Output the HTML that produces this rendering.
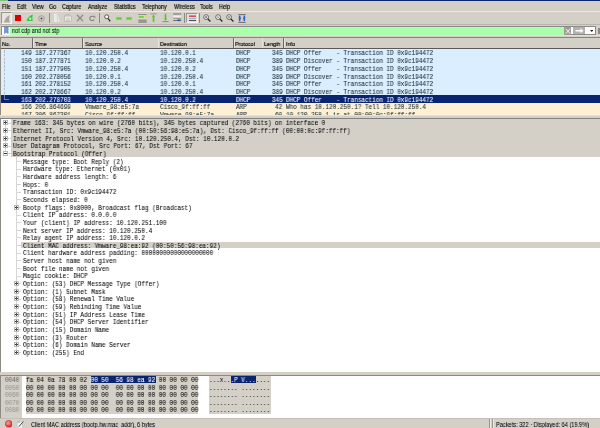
<!DOCTYPE html><html><head><meta charset="utf-8"><style>
*{margin:0;padding:0;box-sizing:border-box}
html,body{width:600px;height:428px;overflow:hidden;background:#d4d0c8}
body{position:relative}
div,span,svg{position:absolute;display:block}
.m{font-family:'Liberation Mono', monospace;font-size:6.6px;white-space:pre;line-height:10.9px;color:#000;-webkit-text-stroke:0.05px currentColor;transform:scaleX(0.907);transform-origin:0 0;will-change:transform}
.s{font-family:'Liberation Sans', sans-serif;font-size:6.5px;white-space:pre;line-height:8px;color:#000;will-change:transform;transform:scaleX(0.83);transform-origin:0 0;-webkit-text-stroke:0.15px #000}
</style></head><body>

<div style="left:0px;top:0px;width:600px;height:1.3px;background:#0a2570;"></div>
<div style="left:0px;top:0px;width:8px;height:1.3px;background:#7cc47c;"></div>
<span class="s" style="left:2px;top:3.2px">File</span>
<span class="s" style="left:17px;top:3.2px">Edit</span>
<span class="s" style="left:32px;top:3.2px">View</span>
<span class="s" style="left:49px;top:3.2px">Go</span>
<span class="s" style="left:62px;top:3.2px">Capture</span>
<span class="s" style="left:87.5px;top:3.2px">Analyze</span>
<span class="s" style="left:113.7px;top:3.2px">Statistics</span>
<span class="s" style="left:142px;top:3.2px">Telephony</span>
<span class="s" style="left:173.7px;top:3.2px">Wireless</span>
<span class="s" style="left:200px;top:3.2px">Tools</span>
<span class="s" style="left:218.7px;top:3.2px">Help</span>
<div style="left:0px;top:10.8px;width:600px;height:0.9px;background:#ebe9e4;"></div>
<div style="left:1px;top:12.2px;width:10.5px;height:11.6px;background:#e6e4df;border-top:0.9px solid #9b9891;border-left:0.9px solid #9b9891;border-bottom:0.7px solid #f4f3f0;border-right:0.7px solid #f4f3f0"></div>
<svg style="left:3px;top:13.5px" width="8" height="9" viewBox="0 0 8 9"><path d="M1 8.5 C2 5 3.5 2.2 6.8 1 C6 3.5 6 6.5 6.8 8.5 Z" fill="#aba69d"/></svg>
<div style="left:15px;top:15px;width:5.7px;height:6px;background:#e00000;"></div>
<svg style="left:26px;top:14.2px" width="7.5" height="7.5" viewBox="0 0 7.5 7.5"><path d="M0.5 7 C1.5 4 3.5 1.5 6.8 0.5 C6.2 3 6.2 5 6.8 7 Z" fill="#2ccc2c"/><circle cx="4.2" cy="4.7" r="1.2" fill="#c8f0c8"/></svg>
<svg style="left:38px;top:14.5px" width="7" height="7" viewBox="0 0 7 7"><circle cx="3.5" cy="3.5" r="2.8" fill="none" stroke="#8f8c85" stroke-width="0.7"/><circle cx="3.5" cy="3.5" r="1" fill="#4a4a4a"/></svg>
<div style="left:49px;top:13px;width:0.9px;height:9.5px;background:#8d8a84;"></div>
<svg style="left:52.5px;top:13px" width="8" height="9.5" viewBox="0 0 8 9.5"><path d="M1 0.8 L4.5 0.5 L6.8 9 L1 9Z" fill="#ebe9e5"/><path d="M4 1 L4.8 9" stroke="#cfccc6" stroke-width="0.8"/></svg>
<svg style="left:64px;top:13.8px" width="8" height="8" viewBox="0 0 8 8"><rect x="0.5" y="2" width="7" height="5.5" fill="#e9e7e3" stroke="#b3b0a9" stroke-width="0.6"/><path d="M1 2 L2 0.5 L5 0.5 L6 2" fill="none" stroke="#b3b0a9" stroke-width="0.6"/><path d="M2 5 H6 M2 6.3 H6" stroke="#aaa7a0" stroke-width="0.5"/></svg>
<svg style="left:76px;top:13.5px" width="8" height="8" viewBox="0 0 8 8"><path d="M0.8 0.8 H7.2 M0.8 7.2 H7.2" stroke="#c4c1ba" stroke-width="0.6"/><path d="M1 1 L7 7 M7 1 L1 7" stroke="#8a8780" stroke-width="1.1"/></svg>
<svg style="left:88px;top:13.5px" width="8" height="8" viewBox="0 0 8 8"><path d="M0.8 0.8 H7.2" stroke="#c4c1ba" stroke-width="0.6"/><path d="M6.2 3.2 A2.4 2.2 0 1 0 6.2 5.6" fill="none" stroke="#85827b" stroke-width="1.1"/><path d="M5 2.3 L7 2.3 L7 4.2" fill="none" stroke="#85827b" stroke-width="0.7"/></svg>
<div style="left:99px;top:13px;width:0.9px;height:9.5px;background:#8d8a84;"></div>
<svg style="left:103.5px;top:13.5px" width="7" height="8" viewBox="0 0 7 8"><circle cx="2.7" cy="2.8" r="2" fill="#f6f6f6" stroke="#3a3a3a" stroke-width="0.8"/><path d="M4.1 4.5 L6.2 7.3" stroke="#1e1e1e" stroke-width="1.2"/></svg>
<svg style="left:114.5px;top:15.5px" width="7" height="5" viewBox="0 0 7 5"><path d="M0.3 2.5 L2 0.6 L2 1.2 L6.6 1.2 L6.6 3.8 L2 3.8 L2 4.4Z" fill="#66cc33"/><path d="M0.5 2.5 L2 1.2 M0.5 2.5 L2 3.8" stroke="#eaf5e0" stroke-width="0.4"/></svg>
<svg style="left:126.3px;top:15.5px" width="7" height="5" viewBox="0 0 7 5"><path d="M6.7 2.5 L5 0.6 L5 1.2 L0.4 1.2 L0.4 3.8 L5 3.8 L5 4.4Z" fill="#66cc33"/><path d="M6.5 2.5 L5 1.2 M6.5 2.5 L5 3.8" stroke="#eaf5e0" stroke-width="0.4"/></svg>
<svg style="left:137.5px;top:13.5px" width="9" height="9" viewBox="0 0 9 9"><rect x="0.3" y="0.3" width="8.4" height="0.7" fill="#777"/><rect x="0.3" y="1.5" width="8.4" height="2.8" fill="#cfe6b0"/><rect x="0.8" y="2" width="5" height="1.8" fill="#7ccc3c"/><rect x="6.8" y="1.6" width="1.8" height="1.6" fill="#f0d020"/><rect x="0.3" y="5.8" width="8.4" height="0.7" fill="#555"/><rect x="0.3" y="7.6" width="8.4" height="0.8" fill="#444"/></svg>
<svg style="left:149.5px;top:13px" width="7" height="9.5" viewBox="0 0 7 9.5"><rect x="0.3" y="0.5" width="6.4" height="0.8" fill="#8a8a8a"/><path d="M3.5 1.8 L5.2 3.8 L4.3 3.8 L4.3 8.8 L2.7 8.8 L2.7 3.8 L1.8 3.8Z" fill="#5cc02a"/></svg>
<svg style="left:161.5px;top:13px" width="7" height="9.5" viewBox="0 0 7 9.5"><rect x="0.3" y="8.3" width="6.4" height="0.8" fill="#777"/><path d="M3.5 7.8 L5.2 5.8 L4.3 5.8 L4.3 0.8 L2.7 0.8 L2.7 5.8 L1.8 5.8Z" fill="#5cc02a"/></svg>
<svg style="left:173px;top:13.3px" width="9" height="9" viewBox="0 0 9 9"><rect x="0.2" y="0.6" width="8" height="0.8" fill="#555"/><rect x="0.2" y="2.5" width="8" height="2" fill="#ecebe8"/><rect x="0.2" y="4.9" width="8" height="0.7" fill="#777"/><rect x="0.2" y="7" width="8" height="0.8" fill="#555"/><path d="M3.8 6.5 L8.3 6.5 L6 8.6Z" fill="#1f4fc8"/></svg>
<div style="left:184.3px;top:13px;width:0.9px;height:9.5px;background:#8d8a84;"></div>
<div style="left:185.5px;top:12.7px;width:12.5px;height:10.2px;background:#e2dfda;border-top:0.9px solid #9b9891;border-left:0.9px solid #9b9891;border-bottom:0.7px solid #f4f3f0;border-right:0.7px solid #f4f3f0"></div>
<div style="left:189px;top:14.8px;width:7.2px;height:0.9px;background:#8fa8a8;"></div>
<div style="left:189px;top:16.2px;width:7.2px;height:0.9px;background:#e84848;"></div>
<div style="left:189px;top:18.0px;width:7.2px;height:1.3px;background:#98b4e0;"></div>
<div style="left:189px;top:20.3px;width:7.2px;height:0.9px;background:#505050;"></div>
<div style="left:199.3px;top:13px;width:0.9px;height:9.5px;background:#8d8a84;"></div>
<svg style="left:203px;top:13.7px" width="8" height="8" viewBox="0 0 8 8"><circle cx="3.1" cy="3.1" r="2.4" fill="#f6f6f6" stroke="#3a3a3a" stroke-width="0.7"/><path d="M2 3.1 H4.2 M3.1 2 V4.2" stroke="#333" stroke-width="0.6"/><path d="M4.8 4.9 L7.4 7.5" stroke="#1e1e1e" stroke-width="1.2"/></svg>
<svg style="left:214.5px;top:13.7px" width="8" height="8" viewBox="0 0 8 8"><circle cx="3.1" cy="3.1" r="2.4" fill="#f6f6f6" stroke="#3a3a3a" stroke-width="0.7"/><path d="M2 3.1 H4.2" stroke="#333" stroke-width="0.6"/><path d="M4.8 4.9 L7.4 7.5" stroke="#1e1e1e" stroke-width="1.2"/></svg>
<svg style="left:226px;top:13.7px" width="8" height="8" viewBox="0 0 8 8"><circle cx="3.1" cy="3.1" r="2.4" fill="#f6f6f6" stroke="#3a3a3a" stroke-width="0.7"/><path d="M2 2.7 H4.2 M2 3.7 H4.2" stroke="#333" stroke-width="0.5"/><path d="M4.8 4.9 L7.4 7.5" stroke="#1e1e1e" stroke-width="1.2"/></svg>
<svg style="left:238px;top:13.5px" width="8" height="9" viewBox="0 0 8 9"><rect x="0.3" y="0.3" width="7.4" height="0.8" fill="#555"/><rect x="0.3" y="7.9" width="7.4" height="0.8" fill="#555"/><path d="M0.8 2 L3.2 4.3 L0.8 6.6Z" fill="#2a5fd0"/><path d="M7.2 2 L4.8 4.3 L7.2 6.6Z" fill="#2a5fd0"/><rect x="1" y="1.6" width="1.4" height="5.6" fill="#2a5fd0"/><rect x="5.6" y="1.6" width="1.4" height="5.6" fill="#2a5fd0"/></svg>
<div style="left:0px;top:23.6px;width:600px;height:0.7px;background:#e9e7e2;"></div>
<div style="left:0px;top:24.3px;width:600px;height:0.8px;background:#b9b5ad;"></div>
<div style="left:1px;top:26px;width:594.5px;height:9.4px;background:#ffffff;border:0.8px solid #8a8a8a"></div>
<div style="left:0px;top:35.4px;width:600px;height:1px;background:#e4e1db;"></div>
<div style="left:1.5px;top:26.5px;width:8.5px;height:8.3px;background:#ffffff;"></div>
<svg style="left:3.5px;top:27.3px" width="5" height="7" viewBox="0 0 5 7"><path d="M0.3 0 H4.2 V6.8 L2.25 5.2 L0.3 6.8Z" fill="#6f9bd8" stroke="#3d6fb8" stroke-width="0.4"/></svg>
<div style="left:10px;top:26.5px;width:553.5px;height:8.3px;background:#aaffaa;"></div>
<span class="s" style="left:12px;top:26.9px;font-size:6.7px;-webkit-text-stroke:0.05px #000">not cdp and not stp</span>
<div style="left:563.5px;top:26.5px;width:7.5px;height:8.3px;background:#9f9c96;"></div>
<svg style="left:564.5px;top:27.5px" width="6" height="6.5" viewBox="0 0 6 6.5"><path d="M0.8 0.8 L5.2 5.7 M5.2 0.8 L0.8 5.7" stroke="#fff" stroke-width="0.9"/></svg>
<div style="left:573px;top:27px;width:11.5px;height:7.3px;background:#b5b1aa;"></div>
<svg style="left:574.5px;top:28px" width="9" height="5.5" viewBox="0 0 9 5.5"><path d="M0.5 2 H5.5 V0.3 L8.5 2.75 L5.5 5.2 V3.5 H0.5Z" fill="#fff"/></svg>
<svg style="left:589.5px;top:29.5px" width="3.5" height="2" viewBox="0 0 3.5 2"><path d="M0 0 H3.5 L1.75 2Z" fill="#222"/></svg>
<div style="left:597.5px;top:27.5px;width:3px;height:6px;background:#8d8a84;"></div>
<div style="left:0px;top:37px;width:600px;height:77.75px;background:#ffffff;border-left:1px solid #8d8a84"></div>
<div style="left:1px;top:37px;width:599px;height:11.5px;background:#d4d0c8;"></div>
<div style="left:0px;top:37px;width:600px;height:0.9px;background:#858585;"></div>
<div style="left:1px;top:48.2px;width:599px;height:1px;background:#5a5a5a;"></div>
<span class="s" style="left:2px;top:40.3px;font-size:6px;transform:scaleX(0.9)">No.</span>
<div style="left:32.0px;top:37.8px;width:0.9px;height:10.5px;background:#6a6a6a;"></div>
<div style="left:32.9px;top:37.8px;width:0.6px;height:10.5px;background:#e6e4df;"></div>
<span class="s" style="left:35px;top:40.3px;font-size:6px;transform:scaleX(0.9)">Time</span>
<div style="left:81.9px;top:37.8px;width:0.9px;height:10.5px;background:#6a6a6a;"></div>
<div style="left:82.80000000000001px;top:37.8px;width:0.6px;height:10.5px;background:#e6e4df;"></div>
<span class="s" style="left:85px;top:40.3px;font-size:6px;transform:scaleX(0.9)">Source</span>
<div style="left:157.5px;top:37.8px;width:0.9px;height:10.5px;background:#6a6a6a;"></div>
<div style="left:158.4px;top:37.8px;width:0.6px;height:10.5px;background:#e6e4df;"></div>
<span class="s" style="left:160px;top:40.3px;font-size:6px;transform:scaleX(0.9)">Destination</span>
<div style="left:233.1px;top:37.8px;width:0.9px;height:10.5px;background:#6a6a6a;"></div>
<div style="left:234.0px;top:37.8px;width:0.6px;height:10.5px;background:#e6e4df;"></div>
<span class="s" style="left:235.3px;top:40.3px;font-size:6px;transform:scaleX(0.9)">Protocol</span>
<div style="left:261.5px;top:37.8px;width:0.9px;height:10.5px;background:#6a6a6a;"></div>
<div style="left:262.4px;top:37.8px;width:0.6px;height:10.5px;background:#e6e4df;"></div>
<span class="s" style="left:264px;top:40.3px;font-size:6px;transform:scaleX(0.9)">Length</span>
<div style="left:283.2px;top:37.8px;width:0.9px;height:10.5px;background:#6a6a6a;"></div>
<div style="left:284.09999999999997px;top:37.8px;width:0.6px;height:10.5px;background:#e6e4df;"></div>
<span class="s" style="left:285.6px;top:40.3px;font-size:6px;transform:scaleX(0.9)">Info</span>
<div style="left:1px;top:49.3px;width:599px;height:65.45px;overflow:hidden">
<div style="left:0;top:0.0px;width:599px;height:7.72px;background:#daeeff"></div>
<span class="m" style="left:19.827px;top:0.2px;color:#12272e">149</span>
<span class="m" style="left:34px;top:0.2px;color:#12272e">187.277367</span>
<span class="m" style="left:84.3px;top:0.2px;color:#12272e">10.120.250.4</span>
<span class="m" style="left:159.3px;top:0.2px;color:#12272e">10.120.0.1</span>
<span class="m" style="left:234.5px;top:0.2px;color:#12272e">DHCP</span>
<span class="m" style="left:270.527px;top:0.2px;color:#12272e">345</span>
<span class="m" style="left:284.5px;top:0.2px;color:#12272e">DHCP Offer    - Transaction ID 0x9c194472</span>
<div style="left:0;top:7.67px;width:599px;height:7.72px;background:#daeeff"></div>
<span class="m" style="left:19.827px;top:7.87px;color:#12272e">150</span>
<span class="m" style="left:34px;top:7.87px;color:#12272e">187.277871</span>
<span class="m" style="left:84.3px;top:7.87px;color:#12272e">10.120.0.2</span>
<span class="m" style="left:159.3px;top:7.87px;color:#12272e">10.120.250.4</span>
<span class="m" style="left:234.5px;top:7.87px;color:#12272e">DHCP</span>
<span class="m" style="left:270.527px;top:7.87px;color:#12272e">389</span>
<span class="m" style="left:284.5px;top:7.87px;color:#12272e">DHCP Discover - Transaction ID 0x9c194472</span>
<div style="left:0;top:15.34px;width:599px;height:7.72px;background:#daeeff"></div>
<span class="m" style="left:19.827px;top:15.54px;color:#12272e">151</span>
<span class="m" style="left:34px;top:15.54px;color:#12272e">187.277905</span>
<span class="m" style="left:84.3px;top:15.54px;color:#12272e">10.120.250.4</span>
<span class="m" style="left:159.3px;top:15.54px;color:#12272e">10.120.0.2</span>
<span class="m" style="left:234.5px;top:15.54px;color:#12272e">DHCP</span>
<span class="m" style="left:270.527px;top:15.54px;color:#12272e">345</span>
<span class="m" style="left:284.5px;top:15.54px;color:#12272e">DHCP Offer    - Transaction ID 0x9c194472</span>
<div style="left:0;top:23.009999999999998px;width:599px;height:7.72px;background:#daeeff"></div>
<span class="m" style="left:19.827px;top:23.209999999999997px;color:#12272e">160</span>
<span class="m" style="left:34px;top:23.209999999999997px;color:#12272e">202.278056</span>
<span class="m" style="left:84.3px;top:23.209999999999997px;color:#12272e">10.120.0.1</span>
<span class="m" style="left:159.3px;top:23.209999999999997px;color:#12272e">10.120.250.4</span>
<span class="m" style="left:234.5px;top:23.209999999999997px;color:#12272e">DHCP</span>
<span class="m" style="left:270.527px;top:23.209999999999997px;color:#12272e">389</span>
<span class="m" style="left:284.5px;top:23.209999999999997px;color:#12272e">DHCP Discover - Transaction ID 0x9c194472</span>
<div style="left:0;top:30.68px;width:599px;height:7.72px;background:#daeeff"></div>
<span class="m" style="left:19.827px;top:30.88px;color:#12272e">161</span>
<span class="m" style="left:34px;top:30.88px;color:#12272e">202.278152</span>
<span class="m" style="left:84.3px;top:30.88px;color:#12272e">10.120.250.4</span>
<span class="m" style="left:159.3px;top:30.88px;color:#12272e">10.120.0.1</span>
<span class="m" style="left:234.5px;top:30.88px;color:#12272e">DHCP</span>
<span class="m" style="left:270.527px;top:30.88px;color:#12272e">345</span>
<span class="m" style="left:284.5px;top:30.88px;color:#12272e">DHCP Offer    - Transaction ID 0x9c194472</span>
<div style="left:0;top:38.35px;width:599px;height:7.72px;background:#daeeff"></div>
<span class="m" style="left:19.827px;top:38.550000000000004px;color:#12272e">162</span>
<span class="m" style="left:34px;top:38.550000000000004px;color:#12272e">202.278667</span>
<span class="m" style="left:84.3px;top:38.550000000000004px;color:#12272e">10.120.0.2</span>
<span class="m" style="left:159.3px;top:38.550000000000004px;color:#12272e">10.120.250.4</span>
<span class="m" style="left:234.5px;top:38.550000000000004px;color:#12272e">DHCP</span>
<span class="m" style="left:270.527px;top:38.550000000000004px;color:#12272e">389</span>
<span class="m" style="left:284.5px;top:38.550000000000004px;color:#12272e">DHCP Discover - Transaction ID 0x9c194472</span>
<div style="left:0;top:46.019999999999996px;width:599px;height:7.72px;background:#0a2570"></div>
<span class="m" style="left:19.827px;top:46.22px;color:#fff">163</span>
<span class="m" style="left:34px;top:46.22px;color:#fff">202.278703</span>
<span class="m" style="left:84.3px;top:46.22px;color:#fff">10.120.250.4</span>
<span class="m" style="left:159.3px;top:46.22px;color:#fff">10.120.0.2</span>
<span class="m" style="left:234.5px;top:46.22px;color:#fff">DHCP</span>
<span class="m" style="left:270.527px;top:46.22px;color:#fff">345</span>
<span class="m" style="left:284.5px;top:46.22px;color:#fff">DHCP Offer    - Transaction ID 0x9c194472</span>
<div style="left:0;top:53.69px;width:599px;height:7.72px;background:#fdf0d5"></div>
<span class="m" style="left:19.827px;top:53.89px;color:#12272e">166</span>
<span class="m" style="left:34px;top:53.89px;color:#12272e">206.864699</span>
<span class="m" style="left:84.3px;top:53.89px;color:#12272e">Vmware_98:e5:7a</span>
<span class="m" style="left:159.3px;top:53.89px;color:#12272e">Cisco_9f:ff:ff</span>
<span class="m" style="left:234.5px;top:53.89px;color:#12272e">ARP</span>
<span class="m" style="left:274.118px;top:53.89px;color:#12272e">42</span>
<span class="m" style="left:284.5px;top:53.89px;color:#12272e">Who has 10.120.250.1? Tell 10.120.250.4</span>
<div style="left:0;top:61.36px;width:599px;height:7.72px;background:#fdf0d5"></div>
<span class="m" style="left:19.827px;top:61.56px;color:#12272e">167</span>
<span class="m" style="left:34px;top:61.56px;color:#12272e">206.867301</span>
<span class="m" style="left:84.3px;top:61.56px;color:#12272e">Cisco_9f:ff:ff</span>
<span class="m" style="left:159.3px;top:61.56px;color:#12272e">Vmware_98:e5:7a</span>
<span class="m" style="left:234.5px;top:61.56px;color:#12272e">ARP</span>
<span class="m" style="left:274.118px;top:61.56px;color:#12272e">60</span>
<span class="m" style="left:284.5px;top:61.56px;color:#12272e">10.120.250.1 is at 00:00:0c:9f:ff:ff</span>
</div>
<div style="left:4.2px;top:49.5px;width:0.8px;height:45.5px;background:repeating-linear-gradient(#b4bcc4 0 2.5px, #dde6ee 2.5px 3.8px)"></div>
<div style="left:4.2px;top:95px;width:0.8px;height:4.4px;background:#6a7aa0"></div>
<div style="left:4.2px;top:98.6px;width:4.5px;height:0.8px;background:#6a7aa0"></div>
<div style="left:0px;top:114.75px;width:600px;height:3.75px;background:#d4d0c8;"></div>
<div style="left:0px;top:114.75px;width:600px;height:1px;background:#e4e1db;"></div>
<div style="left:0px;top:117.6px;width:600px;height:0.9px;background:#808080;"></div>
<div style="left:0px;top:118.6px;width:600px;height:253px;background:#ffffff;border-left:1px solid #8d8a84"></div>
<div style="left:11px;top:118.80000000000001px;width:589px;height:37.79999999999998px;background:#d4d0c8;"></div>
<div style="left:5.3px;top:123.2px;width:0.8px;height:30.6px;background:#d6d6d6"></div>
<div style="left:16.2px;top:156.6px;width:0.8px;height:196.1px;background:#d6d6d6"></div>
<div style="left:8px;top:122.7px;width:3px;height:0.8px;background:#d6d6d6"></div>
<div style="left:3.0px;top:120px;width:5.2px;height:5px;border:0.7px solid #b8b8b8;background:#fff"></div>
<div style="left:4.2px;top:122.1px;width:2.8px;height:0.8px;background:#333"></div>
<div style="left:5.3px;top:121.2px;width:0.6px;height:2.6px;background:#555"></div>
<span class="m" style="left:12.700000000000001px;top:119.4px">Frame 163: 345 bytes on wire (2760 bits), 345 bytes captured (2760 bits) on interface 0</span>
<div style="left:8px;top:130.35000000000002px;width:3px;height:0.8px;background:#d6d6d6"></div>
<div style="left:3.0px;top:128px;width:5.2px;height:5px;border:0.7px solid #b8b8b8;background:#fff"></div>
<div style="left:4.2px;top:130.1px;width:2.8px;height:0.8px;background:#333"></div>
<div style="left:5.3px;top:129.2px;width:0.6px;height:2.6px;background:#555"></div>
<span class="m" style="left:12.700000000000001px;top:127.05000000000001px">Ethernet II, Src: Vmware_98:e5:7a (00:50:56:98:e5:7a), Dst: Cisco_9f:ff:ff (00:00:0c:9f:ff:ff)</span>
<div style="left:8px;top:138.00000000000003px;width:3px;height:0.8px;background:#d6d6d6"></div>
<div style="left:3.0px;top:136px;width:5.2px;height:5px;border:0.7px solid #b8b8b8;background:#fff"></div>
<div style="left:4.2px;top:138.1px;width:2.8px;height:0.8px;background:#333"></div>
<div style="left:5.3px;top:137.2px;width:0.6px;height:2.6px;background:#555"></div>
<span class="m" style="left:12.700000000000001px;top:134.70000000000002px">Internet Protocol Version 4, Src: 10.120.250.4, Dst: 10.120.0.2</span>
<div style="left:8px;top:145.65000000000003px;width:3px;height:0.8px;background:#d6d6d6"></div>
<div style="left:3.0px;top:143px;width:5.2px;height:5px;border:0.7px solid #b8b8b8;background:#fff"></div>
<div style="left:4.2px;top:145.1px;width:2.8px;height:0.8px;background:#333"></div>
<div style="left:5.3px;top:144.2px;width:0.6px;height:2.6px;background:#555"></div>
<span class="m" style="left:12.700000000000001px;top:142.35000000000002px">User Datagram Protocol, Src Port: 67, Dst Port: 67</span>
<div style="left:8px;top:153.3px;width:3px;height:0.8px;background:#d6d6d6"></div>
<div style="left:3.0px;top:151px;width:5.2px;height:5px;border:0.7px solid #b8b8b8;background:#fff"></div>
<div style="left:4.2px;top:153.1px;width:2.8px;height:0.8px;background:#333"></div>
<span class="m" style="left:12.700000000000001px;top:150.0px">Bootstrap Protocol (Offer)</span>
<div style="left:16.8px;top:160.95000000000002px;width:4.699999999999999px;height:0.8px;background:#d6d6d6"></div>
<span class="m" style="left:22.5px;top:157.65px">Message type: Boot Reply (2)</span>
<div style="left:16.8px;top:168.60000000000002px;width:4.699999999999999px;height:0.8px;background:#d6d6d6"></div>
<span class="m" style="left:22.5px;top:165.3px">Hardware type: Ethernet (0x01)</span>
<div style="left:16.8px;top:176.25000000000003px;width:4.699999999999999px;height:0.8px;background:#d6d6d6"></div>
<span class="m" style="left:22.5px;top:172.95000000000002px">Hardware address length: 6</span>
<div style="left:16.8px;top:183.90000000000003px;width:4.699999999999999px;height:0.8px;background:#d6d6d6"></div>
<span class="m" style="left:22.5px;top:180.60000000000002px">Hops: 0</span>
<div style="left:16.8px;top:191.55px;width:4.699999999999999px;height:0.8px;background:#d6d6d6"></div>
<span class="m" style="left:22.5px;top:188.25px">Transaction ID: 0x9c194472</span>
<div style="left:16.8px;top:199.20000000000002px;width:4.699999999999999px;height:0.8px;background:#d6d6d6"></div>
<span class="m" style="left:22.5px;top:195.9px">Seconds elapsed: 0</span>
<div style="left:19.2px;top:206.85000000000002px;width:2.3px;height:0.8px;background:#d6d6d6"></div>
<div style="left:14.0px;top:205px;width:5.2px;height:5px;border:0.7px solid #b8b8b8;background:#fff"></div>
<div style="left:15.2px;top:207.1px;width:2.8px;height:0.8px;background:#333"></div>
<div style="left:16.3px;top:206.2px;width:0.6px;height:2.6px;background:#555"></div>
<span class="m" style="left:22.5px;top:203.55px">Bootp flags: 0x8000, Broadcast flag (Broadcast)</span>
<div style="left:16.8px;top:214.50000000000003px;width:4.699999999999999px;height:0.8px;background:#d6d6d6"></div>
<span class="m" style="left:22.5px;top:211.20000000000002px">Client IP address: 0.0.0.0</span>
<div style="left:16.8px;top:222.15000000000003px;width:4.699999999999999px;height:0.8px;background:#d6d6d6"></div>
<span class="m" style="left:22.5px;top:218.85000000000002px">Your (client) IP address: 10.120.251.100</span>
<div style="left:16.8px;top:229.8px;width:4.699999999999999px;height:0.8px;background:#d6d6d6"></div>
<span class="m" style="left:22.5px;top:226.5px">Next server IP address: 10.120.250.4</span>
<div style="left:16.8px;top:237.45000000000002px;width:4.699999999999999px;height:0.8px;background:#d6d6d6"></div>
<span class="m" style="left:22.5px;top:234.15px">Relay agent IP address: 10.120.0.2</span>
<div style="left:16.8px;top:245.10000000000002px;width:4.699999999999999px;height:0.8px;background:#d6d6d6"></div>
<div style="left:21px;top:241.8px;width:579px;height:6.7px;background:#d4d0c8;"></div>
<span class="m" style="left:22.5px;top:241.8px">Client MAC address: Vmware_98:ea:92 (00:50:56:98:ea:92)</span>
<div style="left:16.8px;top:252.75000000000003px;width:4.699999999999999px;height:0.8px;background:#d6d6d6"></div>
<span class="m" style="left:22.5px;top:249.45000000000002px">Client hardware address padding: 00000000000000000000</span>
<div style="left:16.8px;top:260.40000000000003px;width:4.699999999999999px;height:0.8px;background:#d6d6d6"></div>
<span class="m" style="left:22.5px;top:257.1px">Server host name not given</span>
<div style="left:16.8px;top:268.05px;width:4.699999999999999px;height:0.8px;background:#d6d6d6"></div>
<span class="m" style="left:22.5px;top:264.75px">Boot file name not given</span>
<div style="left:16.8px;top:275.7px;width:4.699999999999999px;height:0.8px;background:#d6d6d6"></div>
<span class="m" style="left:22.5px;top:272.4px">Magic cookie: DHCP</span>
<div style="left:19.2px;top:283.35px;width:2.3px;height:0.8px;background:#d6d6d6"></div>
<div style="left:14.0px;top:281px;width:5.2px;height:5px;border:0.7px solid #b8b8b8;background:#fff"></div>
<div style="left:15.2px;top:283.1px;width:2.8px;height:0.8px;background:#333"></div>
<div style="left:16.3px;top:282.2px;width:0.6px;height:2.6px;background:#555"></div>
<span class="m" style="left:22.5px;top:280.05px">Option: (53) DHCP Message Type (Offer)</span>
<div style="left:19.2px;top:291.00000000000006px;width:2.3px;height:0.8px;background:#d6d6d6"></div>
<div style="left:14.0px;top:289px;width:5.2px;height:5px;border:0.7px solid #b8b8b8;background:#fff"></div>
<div style="left:15.2px;top:291.1px;width:2.8px;height:0.8px;background:#333"></div>
<div style="left:16.3px;top:290.2px;width:0.6px;height:2.6px;background:#555"></div>
<span class="m" style="left:22.5px;top:287.70000000000005px">Option: (1) Subnet Mask</span>
<div style="left:19.2px;top:298.65000000000003px;width:2.3px;height:0.8px;background:#d6d6d6"></div>
<div style="left:14.0px;top:296px;width:5.2px;height:5px;border:0.7px solid #b8b8b8;background:#fff"></div>
<div style="left:15.2px;top:298.1px;width:2.8px;height:0.8px;background:#333"></div>
<div style="left:16.3px;top:297.2px;width:0.6px;height:2.6px;background:#555"></div>
<span class="m" style="left:22.5px;top:295.35px">Option: (58) Renewal Time Value</span>
<div style="left:19.2px;top:306.3px;width:2.3px;height:0.8px;background:#d6d6d6"></div>
<div style="left:14.0px;top:304px;width:5.2px;height:5px;border:0.7px solid #b8b8b8;background:#fff"></div>
<div style="left:15.2px;top:306.1px;width:2.8px;height:0.8px;background:#333"></div>
<div style="left:16.3px;top:305.2px;width:0.6px;height:2.6px;background:#555"></div>
<span class="m" style="left:22.5px;top:303.0px">Option: (59) Rebinding Time Value</span>
<div style="left:19.2px;top:313.95px;width:2.3px;height:0.8px;background:#d6d6d6"></div>
<div style="left:14.0px;top:312px;width:5.2px;height:5px;border:0.7px solid #b8b8b8;background:#fff"></div>
<div style="left:15.2px;top:314.1px;width:2.8px;height:0.8px;background:#333"></div>
<div style="left:16.3px;top:313.2px;width:0.6px;height:2.6px;background:#555"></div>
<span class="m" style="left:22.5px;top:310.65px">Option: (51) IP Address Lease Time</span>
<div style="left:19.2px;top:321.6px;width:2.3px;height:0.8px;background:#d6d6d6"></div>
<div style="left:14.0px;top:319px;width:5.2px;height:5px;border:0.7px solid #b8b8b8;background:#fff"></div>
<div style="left:15.2px;top:321.1px;width:2.8px;height:0.8px;background:#333"></div>
<div style="left:16.3px;top:320.2px;width:0.6px;height:2.6px;background:#555"></div>
<span class="m" style="left:22.5px;top:318.3px">Option: (54) DHCP Server Identifier</span>
<div style="left:19.2px;top:329.25000000000006px;width:2.3px;height:0.8px;background:#d6d6d6"></div>
<div style="left:14.0px;top:327px;width:5.2px;height:5px;border:0.7px solid #b8b8b8;background:#fff"></div>
<div style="left:15.2px;top:329.1px;width:2.8px;height:0.8px;background:#333"></div>
<div style="left:16.3px;top:328.2px;width:0.6px;height:2.6px;background:#555"></div>
<span class="m" style="left:22.5px;top:325.95000000000005px">Option: (15) Domain Name</span>
<div style="left:19.2px;top:336.90000000000003px;width:2.3px;height:0.8px;background:#d6d6d6"></div>
<div style="left:14.0px;top:335px;width:5.2px;height:5px;border:0.7px solid #b8b8b8;background:#fff"></div>
<div style="left:15.2px;top:337.1px;width:2.8px;height:0.8px;background:#333"></div>
<div style="left:16.3px;top:336.2px;width:0.6px;height:2.6px;background:#555"></div>
<span class="m" style="left:22.5px;top:333.6px">Option: (3) Router</span>
<div style="left:19.2px;top:344.55px;width:2.3px;height:0.8px;background:#d6d6d6"></div>
<div style="left:14.0px;top:342px;width:5.2px;height:5px;border:0.7px solid #b8b8b8;background:#fff"></div>
<div style="left:15.2px;top:344.1px;width:2.8px;height:0.8px;background:#333"></div>
<div style="left:16.3px;top:343.2px;width:0.6px;height:2.6px;background:#555"></div>
<span class="m" style="left:22.5px;top:341.25px">Option: (6) Domain Name Server</span>
<div style="left:19.2px;top:352.2px;width:2.3px;height:0.8px;background:#d6d6d6"></div>
<div style="left:14.0px;top:350px;width:5.2px;height:5px;border:0.7px solid #b8b8b8;background:#fff"></div>
<div style="left:15.2px;top:352.1px;width:2.8px;height:0.8px;background:#333"></div>
<div style="left:16.3px;top:351.2px;width:0.6px;height:2.6px;background:#555"></div>
<span class="m" style="left:22.5px;top:348.9px">Option: (255) End</span>
<div style="left:0px;top:371.6px;width:600px;height:3.6px;background:#d4d0c8;"></div>
<div style="left:0px;top:374.8px;width:600px;height:0.8px;background:#8d8a84;"></div>
<div style="left:0px;top:375.6px;width:600px;height:42px;background:#ffffff;border-left:1px solid #8d8a84"></div>
<div style="left:1px;top:375.6px;width:21px;height:42.1px;background:#d4d0c8;"></div>
<div style="left:26px;top:375.6px;width:172px;height:38.099999999999966px;background:#d4d0c8;"></div>
<span class="m" style="left:4.6px;top:376.2px;color:#6a6a66">0040</span>
<span class="m" style="left:4.6px;top:383.75px;color:#989690">0050</span>
<span class="m" style="left:4.6px;top:391.3px;color:#989690">0060</span>
<span class="m" style="left:4.6px;top:398.84999999999997px;color:#989690">0070</span>
<span class="m" style="left:4.6px;top:406.4px;color:#989690">0080</span>
<div style="left:208.9px;top:375.6px;width:61.947px;height:38.099999999999966px;background:#d4d0c8;"></div>
<div style="left:90.938px;top:375.8px;width:64.83800000000001px;height:7.6px;background:#0a2570;"></div>
<div style="left:230.74599999999998px;top:375.8px;width:25.537px;height:7.6px;background:#0a2570;"></div>
<span class="m" style="left:26.099999999999998px;top:376.2px">fa 04 0a 78 00 02 <span style="position:static;display:inline;color:#fff">00 50  56 98 ea 92</span> 00 00 00 00</span>
<span class="m" style="left:208.9px;top:376.2px">...x..<span style="position:static;display:inline;color:#fff">.P V...</span>....</span>
<span class="m" style="left:26.099999999999998px;top:383.75px">00 00 00 00 00 00 00 00  00 00 00 00 00 00 00 00</span>
<span class="m" style="left:208.9px;top:383.75px">........ ........</span>
<span class="m" style="left:26.099999999999998px;top:391.3px">00 00 00 00 00 00 00 00  00 00 00 00 00 00 00 00</span>
<span class="m" style="left:208.9px;top:391.3px">........ ........</span>
<span class="m" style="left:26.099999999999998px;top:398.84999999999997px">00 00 00 00 00 00 00 00  00 00 00 00 00 00 00 00</span>
<span class="m" style="left:208.9px;top:398.84999999999997px">........ ........</span>
<span class="m" style="left:26.099999999999998px;top:406.4px">00 00 00 00 00 00 00 00  00 00 00 00 00 00 00 00</span>
<span class="m" style="left:208.9px;top:406.4px">........ ........</span>
<div style="left:0px;top:417.6px;width:600px;height:10.4px;background:#d4d0c8;"></div>
<div style="left:0px;top:417.6px;width:600px;height:0.9px;background:#c4c0b8;"></div>
<svg style="left:4.5px;top:420.3px" width="7.5" height="7.7" viewBox="0 0 7.5 7.7"><defs><radialGradient id="rg" cx="0.4" cy="0.35" r="0.7"><stop offset="0" stop-color="#ff9a9a"/><stop offset="1" stop-color="#d42020"/></radialGradient></defs><circle cx="3.75" cy="3.85" r="3.5" fill="url(#rg)" stroke="#b01818" stroke-width="0.4"/></svg>
<svg style="left:16.5px;top:420.8px" width="7" height="7.2" viewBox="0 0 7 7.2"><rect x="0.3" y="0.8" width="4.8" height="6.2" fill="#f4f4f4" stroke="#bbb" stroke-width="0.3"/><rect x="0.5" y="0.6" width="2.3" height="1" fill="#5aa8e8"/><path d="M1.8 5.8 L6.3 0.5" stroke="#333" stroke-width="0.9"/></svg>
<span class="s" style="left:31px;top:420.6px;font-size:6.7px;-webkit-text-stroke:0.05px #000">Client MAC address (bootp.hw.mac_addr), 6 bytes</span>
<div style="left:489px;top:419px;width:0.8px;height:9px;background:#9a978f;"></div>
<div style="left:489.8px;top:419px;width:0.6px;height:9px;background:#ecebe7;"></div>
<div style="left:491.7px;top:419px;width:0.8px;height:9px;background:#9a978f;"></div>
<div style="left:492.5px;top:419px;width:0.6px;height:9px;background:#ecebe7;"></div>
<span class="s" style="left:496px;top:420.6px;font-size:6.8px;-webkit-text-stroke:0.05px #000">Packets: 322 · Displayed: 64 (19.9%)</span>
</body></html>
